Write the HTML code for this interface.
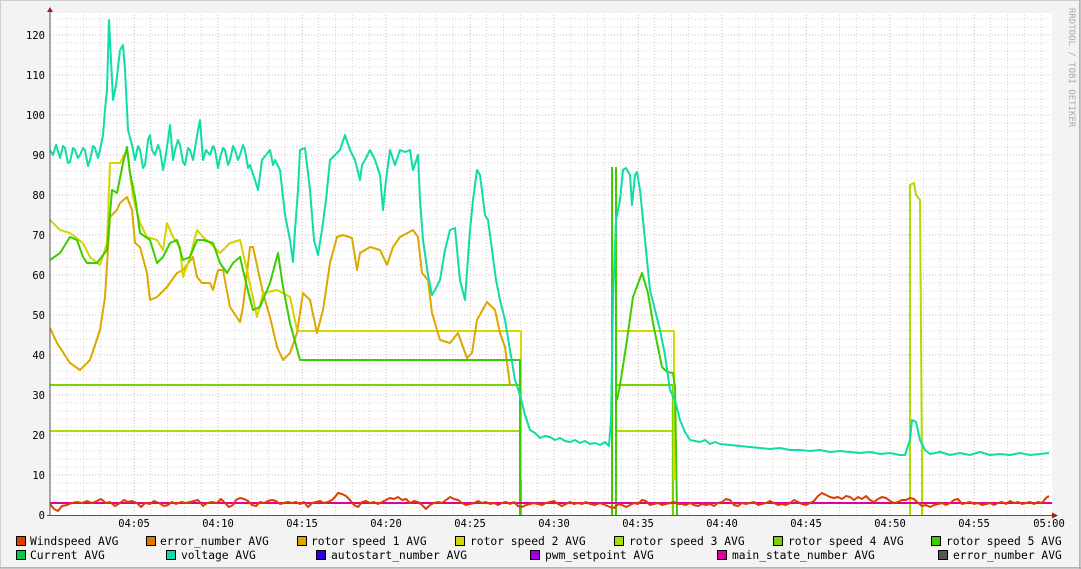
<!DOCTYPE html>
<html><head><meta charset="utf-8"><style>
body{margin:0;background:#f3f3f3;}
svg{display:block}
text{font-family:"DejaVu Sans Mono","Liberation Mono",monospace;}
</style></head><body>
<svg width="1081" height="569" viewBox="0 0 1081 569" xmlns="http://www.w3.org/2000/svg">
<rect x="0" y="0" width="1081" height="569" fill="#f3f3f3"/>
<rect x="0.5" y="0.5" width="1079" height="567" fill="none" stroke="#cfcfcf"/>
<line x1="1080" y1="0" x2="1080" y2="569" stroke="#9a9a9a"/>
<line x1="0" y1="568" x2="1081" y2="568" stroke="#9a9a9a"/>
<rect x="50" y="13" width="1002" height="502" fill="#ffffff"/>
<g id="grid" stroke-width="1" fill="none">
<path stroke="#d6d6d6" stroke-dasharray="1,2" d="M50 507H1052M50 499H1052M50 491H1052M50 483H1052M50 467H1052M50 459H1052M50 451H1052M50 443H1052M50 427H1052M50 419H1052M50 411H1052M50 403H1052M50 387H1052M50 379H1052M50 371H1052M50 363H1052M50 347H1052M50 339H1052M50 331H1052M50 323H1052M50 307H1052M50 299H1052M50 291H1052M50 283H1052M50 267H1052M50 259H1052M50 251H1052M50 243H1052M50 227H1052M50 219H1052M50 211H1052M50 203H1052M50 187H1052M50 179H1052M50 171H1052M50 163H1052M50 147H1052M50 139H1052M50 131H1052M50 123H1052M50 107H1052M50 99H1052M50 91H1052M50 83H1052M50 67H1052M50 59H1052M50 51H1052M50 43H1052M50 27H1052M50 19H1052
M66.8 15V515M83.6 15V515M100.4 15V515M117.2 15V515M150.8 15V515M167.6 15V515M184.4 15V515M201.2 15V515M234.8 15V515M251.6 15V515M268.4 15V515M285.2 15V515M318.8 15V515M335.6 15V515M352.4 15V515M369.2 15V515M402.8 15V515M419.6 15V515M436.4 15V515M453.2 15V515M486.8 15V515M503.6 15V515M520.4 15V515M537.2 15V515M570.8 15V515M587.6 15V515M604.4 15V515M621.2 15V515M654.8 15V515M671.6 15V515M688.4 15V515M705.2 15V515M738.8 15V515M755.6 15V515M772.4 15V515M789.2 15V515M822.8 15V515M839.6 15V515M856.4 15V515M873.2 15V515M906.8 15V515M923.6 15V515M940.4 15V515M957.2 15V515M990.8 15V515M1007.6 15V515M1024.4 15V515M1041.2 15V515"/>
<path stroke="#e6b4b4" stroke-dasharray="1,2" d="M50 475H1052M50 435H1052M50 395H1052M50 355H1052M50 315H1052M50 275H1052M50 235H1052M50 195H1052M50 155H1052M50 115H1052M50 75H1052M50 35H1052
M134 15V515M218 15V515M302 15V515M386 15V515M470 15V515M554 15V515M638 15V515M722 15V515M806 15V515M890 15V515M974 15V515"/>
</g>
<g font-size="10.5" fill="#000" text-anchor="end">
<text x="45" y="519">0</text><text x="45" y="479">10</text><text x="45" y="439">20</text><text x="45" y="399">30</text><text x="45" y="359">40</text><text x="45" y="319">50</text><text x="45" y="279">60</text><text x="45" y="239">70</text><text x="45" y="199">80</text><text x="45" y="159">90</text><text x="45" y="119">100</text><text x="45" y="79">110</text><text x="45" y="39">120</text>
</g>
<g font-size="10.5" fill="#000" text-anchor="middle">
<text x="134" y="527">04:05</text><text x="218" y="527">04:10</text><text x="302" y="527">04:15</text><text x="386" y="527">04:20</text><text x="470" y="527">04:25</text><text x="554" y="527">04:30</text><text x="638" y="527">04:35</text><text x="722" y="527">04:40</text><text x="806" y="527">04:45</text><text x="890" y="527">04:50</text><text x="974" y="527">04:55</text><text x="1049" y="527">05:00</text>
</g>
<text x="1069" y="8" font-size="9" fill="#aaa" transform="rotate(90 1069 8)">RRDTOOL / TOBI OETIKER</text>

<g fill="none" stroke-width="2" stroke-linejoin="round">
<!-- horizontal steps -->
<path stroke="#aadd00" d="M50 431H521V515M617 431H673V470"/>
<path stroke="#77d400" d="M50 385H521V515M617 385H673V515"/>
<path stroke="#d8d800" d="M297 331H521V480M617 331H674V480"/>
<!-- rotor speed 1 -->
<path stroke="#dca800" d="M50 328L57 343L70 363L80 370L90 360L100 330L105 297L110 217L117 210L120 203L127 197L132 210L135 243L140 247L147 273L150 300L157 297L167 287L177 273L183 270L193 257L197 277L202 283L210 283L213 290L218 270L223 270L230 307L240 322L243 307L250 247L253 247L263 293L270 317L277 347L283 360L290 353L297 333L303 293L310 300L317 333L323 310L330 263L337 237L343 235L352 238L357 270L360 253L370 247L380 250L387 265L393 247L400 237L413 230L418 237L422 273L428 280L432 313L440 340L450 343L458 333L463 347L467 358L472 353L477 320L487 302L495 310L500 333L505 347L510 385"/>
<!-- rotor speed 2 -->
<path stroke="#d4d400" d="M50 220L60 230L70 233L83 243L90 257L100 265L107 243L110 163L120 163L127 150L133 197L140 223L147 237L157 240L163 250L167 223L173 237L180 247L183 277L190 257L197 230L203 237L210 243L220 253L230 243L240 240L247 270L257 317L263 293L277 290L290 297L297 330"/>
<!-- rotor speed 5 -->
<path stroke="#3ccc00" d="M50 260L60 253L70 237L77 240L83 257L87 263L97 263L107 250L112 190L117 193L123 163L127 147L130 173L135 197L140 233L150 240L157 263L163 257L170 243L177 240L183 260L190 257L197 240L203 240L213 243L220 263L227 273L233 263L240 257L247 287L253 310L260 307L270 283L278 253L283 287L290 323L300 360H520V515M612 515V167M616 167V515M617 400L620 385L627 340L633 297L642 273L648 293L653 323L662 367L667 372L673 373L675 387L677 515"/>
<path stroke="#aadd00" d="M910 515V185L914 183L916 195L920 200L922 463V515"/>
<!-- voltage -->
<path stroke="#10dca8" d="M50 150L53 155L56 145L60 158L63 146L65 148L68 163L70 162L73 148L75 150L78 158L80 155L83 148L85 150L88 166L90 160L93 146L95 148L98 158L100 150L103 135L105 110L107 90L109 20L111 60L113 100L116 85L120 50L123 45L125 70L128 130L132 145L135 160L138 146L140 150L143 168L145 165L148 140L150 135L152 150L155 155L158 145L160 150L163 170L165 160L168 140L170 125L173 160L175 150L178 140L180 145L183 162L185 165L188 148L190 150L193 160L195 148L198 130L200 120L203 160L206 150L210 155L213 146L215 150L218 168L220 158L223 148L225 150L228 165L230 160L233 146L235 150L238 160L240 155L243 145L245 150L248 168L250 165L255 180L258 190L262 160L266 155L270 150L273 165L275 160L280 170L285 215L290 240L293 262L295 230L298 190L300 150L305 148L310 190L314 240L318 255L322 230L326 200L330 160L335 155L340 150L345 135L350 150L355 160L360 180L362 165L365 160L370 150L375 160L380 175L383 210L386 180L390 150L395 165L400 150L405 152L410 150L413 170L418 155L420 200L423 240L428 275L432 295L435 290L440 280L445 250L450 230L455 228L458 260L460 280L465 300L470 230L473 200L477 170L480 175L485 215L488 220L492 250L496 280L500 300L505 320L510 350L515 380L520 395L525 415L530 430L535 433L540 438L545 436L550 437L555 440L560 438L565 441L570 442L575 440L580 443L585 441L590 444L595 443L600 445L605 442L609 446L611 420L613 300L616 220L620 200L623 170L626 168L630 175L632 205L635 175L637 172L640 190L645 240L650 290L655 310L660 330L665 355L670 390L675 400L680 420L685 432L690 440L695 441L700 442L705 440L710 444L715 442L720 444L730 445L740 446L750 447L760 448L770 449L780 448L790 450L800 450L810 451L820 450L830 452L840 451L850 452L860 453L870 452L880 454L890 453L900 455L905 455L910 440L912 420L916 422L920 440L925 450L930 454L940 452L950 455L960 453L970 455L980 452L990 455L1000 454L1010 455L1020 453L1030 455L1040 454L1049 453"/>
<!-- magenta -->
<path stroke="#e000a0" d="M50 503H1052"/>
<!-- windspeed -->
<path stroke="#e03c00" d="M50 504L54 509L58 511L62 506L67 505L72 503L77 502L82 503L87 501L92 503L97 501L101 499L106 503L110 502L115 506L120 503L124 500L128 502L132 501L137 503L141 507L145 503L150 504L154 501L159 503L164 506L168 505L172 502L176 504L181 502L186 503L190 502L194 501L198 500L203 506L207 503L212 502L217 503L221 499L225 503L229 507L233 505L236 500L240 498L244 499L248 501L252 505L256 506L260 502L264 503L268 501L272 500L276 501L280 504L284 503L288 502L292 503L296 502L300 504L304 502L308 507L312 503L316 502L320 501L324 503L328 502L332 500L335 497L338 493L342 494L346 496L350 500L354 505L358 507L362 502L366 501L370 503L374 502L378 504L382 502L386 500L390 498L394 499L398 497L402 500L406 499L410 503L414 501L418 502L422 505L426 509L430 505L434 503L438 502L442 503L446 500L450 497L454 499L458 500L462 503L466 505L470 504L474 503L478 501L482 503L486 502L490 504L494 503L498 505L502 503L506 502L510 504L514 502L518 506L522 507L526 505L530 504L534 503L538 504L542 505L546 503L550 502L554 501L558 504L562 506L566 504L570 502L574 504L578 503L582 504L586 502L590 504L595 505L600 503L605 505L610 507L614 508L618 504L622 505L626 507L630 505L634 503L638 504L642 500L646 501L650 505L654 504L658 503L662 505L666 504L670 503L674 502L678 504L682 504L686 505L690 503L694 505L698 506L702 504L706 505L710 504L714 506L718 503L722 502L726 499L730 500L734 505L738 506L742 503L746 504L750 503L754 502L758 505L762 504L766 503L770 501L774 503L778 505L782 504L786 505L790 503L794 500L798 502L802 504L806 505L810 503L814 501L818 496L822 493L826 495L830 497L834 498L838 497L842 499L846 496L850 497L854 500L858 497L862 499L866 496L870 500L874 502L878 499L882 497L886 498L890 501L894 503L898 502L902 500L906 500L910 498L914 499L918 503L922 506L926 505L930 507L934 505L938 504L942 503L946 505L950 503L954 500L958 499L962 504L966 503L970 502L974 504L978 503L982 505L986 504L990 503L994 505L998 503L1002 502L1006 504L1010 501L1014 503L1018 502L1022 504L1026 503L1030 502L1034 504L1038 502L1042 503L1046 498L1049 496"/>
</g>
<!-- axes -->
<line x1="50" y1="12" x2="50" y2="515" stroke="#555" stroke-width="1"/>
<line x1="47" y1="515.5" x2="1055" y2="515.5" stroke="#555" stroke-width="1"/>
<path d="M47 12L53 12L50 7Z" fill="#9a2020"/>
<path d="M1052 512.5L1052 518.5L1058 515.5Z" fill="#9a2020"/>

<g font-size="11.3" fill="#000" stroke="#000" stroke-width="1">
<rect x="16.5" y="536.5" width="9" height="9" fill="#e03c00"/>
<rect x="146.5" y="536.5" width="9" height="9" fill="#e07800"/>
<rect x="297.5" y="536.5" width="9" height="9" fill="#dca800"/>
<rect x="455.5" y="536.5" width="9" height="9" fill="#d8d800"/>
<rect x="614.5" y="536.5" width="9" height="9" fill="#aadd00"/>
<rect x="773.5" y="536.5" width="9" height="9" fill="#77d400"/>
<rect x="931.5" y="536.5" width="9" height="9" fill="#3ccc00"/>
<rect x="16.5" y="550.5" width="9" height="9" fill="#00cc44"/>
<rect x="166.5" y="550.5" width="9" height="9" fill="#10dca8"/>
<rect x="316.5" y="550.5" width="9" height="9" fill="#3000e0"/>
<rect x="530.5" y="550.5" width="9" height="9" fill="#a000e0"/>
<rect x="717.5" y="550.5" width="9" height="9" fill="#e000a0"/>
<rect x="938.5" y="550.5" width="9" height="9" fill="#555555"/>
</g>
<g font-size="11.3" fill="#000">
<text x="30" y="545">Windspeed AVG</text>
<text x="160" y="545">error_number AVG</text>
<text x="311" y="545">rotor speed 1 AVG</text>
<text x="470" y="545">rotor speed 2 AVG</text>
<text x="629" y="545">rotor speed 3 AVG</text>
<text x="788" y="545">rotor speed 4 AVG</text>
<text x="946" y="545">rotor speed 5 AVG</text>
<text x="30" y="559">Current AVG</text>
<text x="181" y="559">voltage AVG</text>
<text x="331" y="559">autostart_number AVG</text>
<text x="545" y="559">pwm_setpoint AVG</text>
<text x="732" y="559">main_state_number AVG</text>
<text x="953" y="559">error_number AVG</text>
</g>
</svg>
</body></html>
